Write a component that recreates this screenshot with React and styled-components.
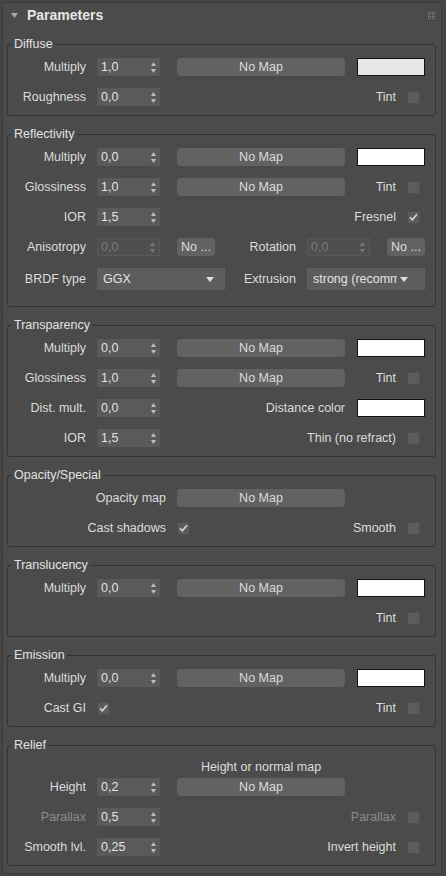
import React from 'react';
import styled, { createGlobalStyle } from 'styled-components';

const GlobalStyle = createGlobalStyle`
  html, body { margin: 0; padding: 0; background: #454545; }
  body {
    font-family: "Liberation Sans", Arial, sans-serif;
    font-size: 12.5px;
    color: #dcdcdc;
  }
  * { box-sizing: border-box; }
`;

const Page = styled.div`
  width: 446px;
  height: 876px;
  padding: 2px 0 0 2px;
  background: #454545;
  overflow: hidden;
`;

const Panel = styled.section`
  width: 440px;
  height: 872px;
  background: #4b4b4b;
  border: 1px solid #3a3a3a;
  border-radius: 4px 4px 3px 3px;
  padding: 0 5px 5px 4px;
  display: flex;
  flex-direction: column;
`;

const Header = styled.div`
  flex: none;
  height: 24px;
  display: flex;
  align-items: center;
  padding: 0 1px 0 4px;
`;

const HeaderTitle = styled.div`
  flex: 1;
  margin-left: 9px;
  font-weight: bold;
  font-size: 14px;
  color: #e6e6e6;
`;

const Groups = styled.div`
  flex: none;
  margin-top: 17px;
  display: flex;
  flex-direction: column;
  gap: 18px;
`;

const Group = styled.div`
  position: relative;
  border: 1px solid #333333;
  border-radius: 3px;
  padding: 13px 0 9px 0;
  display: flex;
  flex-direction: column;
`;

const Legend = styled.span`
  position: absolute;
  top: -8px;
  left: 4px;
  padding: 0 2px;
  line-height: 14px;
  background: #4b4b4b;
  color: #e2e2e2;
`;

const DEFAULT_COLS = '78px 11px 63px 17px 168px 12px 68px';
const ANISO_COLS = '78px 11px 63px 17px 38px 81px 11px 63px 17px 38px';
const BRDF_COLS = '78px 11px 128px 71px 11px 118px';
const WIDE_COLS = '158px 11px 168px 12px 68px';

const Row = styled.div`
  flex: none;
  display: grid;
  grid-template-columns: ${(p) => p.$cols || DEFAULT_COLS};
  grid-template-rows: ${(p) => p.$h || 18}px;
  height: ${(p) => p.$h || 18}px;
  margin-top: ${(p) => (p.$mt === undefined ? 12 : p.$mt)}px;
  margin-bottom: ${(p) => p.$mb || 0}px;
  align-items: center;
  &:first-of-type { margin-top: 0; }
`;

const Label = styled.div`
  grid-column: ${(p) => p.$col || '1'};
  grid-row: 1;
  text-align: ${(p) => p.$align || 'right'};
  white-space: nowrap;
  color: ${(p) => (p.$disabled ? '#8a8a8a' : '#dcdcdc')};
  line-height: 16px;
`;

const SpinBox = styled.div`
  grid-column: ${(p) => p.$col || '3'};
  grid-row: 1;
  height: 18px;
  display: flex;
  align-items: center;
  padding: 0 4px 0 4px;
  background: ${(p) => (p.$disabled ? '#4f4f4f' : '#5a5a5a')};
  border: ${(p) => (p.$disabled ? '1px solid #585858' : 'none')};
  color: ${(p) => (p.$disabled ? '#7a7a7a' : '#e2e2e2')};
`;

const SpinValue = styled.span`
  flex: 1;
  margin-left: ${(p) => (p.$disabled ? -1 : 0)}px;
`;

const MapButton = styled.button`
  grid-column: ${(p) => p.$col || '5'};
  grid-row: 1;
  justify-self: stretch;
  height: 18px;
  padding: 0;
  border: none;
  border-radius: 4px;
  background: #626262;
  color: #dcdcdc;
  font: inherit;
  text-align: center;
`;

const Swatch = styled.div`
  grid-column: ${(p) => p.$col || '7'};
  grid-row: 1;
  height: 18px;
  background: ${(p) => p.$color || '#ffffff'};
  border: 1px solid #111111;
`;

const CheckField = styled.div`
  grid-column: ${(p) => p.$col || '5 / 8'};
  grid-row: 1;
  display: flex;
  align-items: center;
  justify-content: ${(p) => (p.$left ? 'flex-start' : 'flex-end')};
  gap: 11px;
  padding-right: ${(p) => (p.$left ? 0 : 5)}px;
`;

const Box = styled.div`
  width: 13px;
  height: 13px;
  flex: none;
  background: #5c5c5c;
  border: 1px solid #4e4e4e;
  display: flex;
  align-items: center;
  justify-content: center;
`;

const Dropdown = styled.div`
  grid-column: ${(p) => p.$col || '3'};
  grid-row: 1;
  height: 22px;
  display: flex;
  align-items: center;
  padding: 0 ${(p) => p.$arrowPad || 11}px 0 6px;
  background: #5d5d5d;
  color: #e2e2e2;
  overflow: hidden;
`;

const DropText = styled.span`
  flex: 1;
  min-width: 0;
  white-space: nowrap;
  overflow: hidden;
  margin-right: 3px;
`;

const Caption = styled.div`
  grid-column: 5;
  grid-row: 1;
  text-align: center;
  line-height: 16px;
  color: #dcdcdc;
  white-space: nowrap;
`;

const Spinner = ({ value, col, disabled }) => (
  <SpinBox $col={col} $disabled={disabled}>
    <SpinValue $disabled={disabled}>{value}</SpinValue>
    <svg width="5" height="11" viewBox="0 0 5 11">
      <polygon points="2.5,0 5,4 0,4" fill={disabled ? '#777' : '#bdbdbd'} />
      <polygon points="0,7 5,7 2.5,11" fill={disabled ? '#777' : '#bdbdbd'} />
    </svg>
  </SpinBox>
);

const Check = ({ checked }) => (
  <Box>
    {checked && (
      <svg width="9" height="8" viewBox="0 0 9 8">
        <path d="M1 4.2 L3.3 6.8 L8 1.2" stroke="#d6d6d6" strokeWidth="1.6" fill="none" />
      </svg>
    )}
  </Box>
);

const CheckRight = ({ label, checked, col, disabled }) => (
  <CheckField $col={col}>
    <Label as="span" $disabled={disabled}>{label}</Label>
    <Check checked={checked} />
  </CheckField>
);

const Select = ({ value, col, arrowPad }) => (
  <Dropdown $col={col} $arrowPad={arrowPad}>
    <DropText>{value}</DropText>
    <svg width="8" height="5" viewBox="0 0 8 5">
      <polygon points="0,0 8,0 4,5" fill="#e0e0e0" />
    </svg>
  </Dropdown>
);

const Grip = () => (
  <svg width="7" height="7" viewBox="0 0 7 7">
    {[0, 2, 4, 6].map((y) =>
      [0, 2, 4, 6].map((x) => (
        <rect key={`${x}-${y}`} x={x} y={y} width="1" height="1" fill="#8c8c8c" />
      ))
    )}
  </svg>
);

export default function App() {
  return (
    <>
      <GlobalStyle />
      <Page>
        <Panel>
          <Header>
            <svg width="7" height="5" viewBox="0 0 7 5">
              <polygon points="0,0 7,0 3.5,5" fill="#a8a8a8" />
            </svg>
            <HeaderTitle>Parameters</HeaderTitle>
            <Grip />
          </Header>

          <Groups>
            <Group>
              <Legend>Diffuse</Legend>
              <Row>
                <Label>Multiply</Label>
                <Spinner value="1,0" />
                <MapButton>No Map</MapButton>
                <Swatch $color="#e6e6e6" />
              </Row>
              <Row>
                <Label>Roughness</Label>
                <Spinner value="0,0" />
                <CheckRight label="Tint" />
              </Row>
            </Group>

            <Group>
              <Legend>Reflectivity</Legend>
              <Row>
                <Label>Multiply</Label>
                <Spinner value="0,0" />
                <MapButton>No Map</MapButton>
                <Swatch />
              </Row>
              <Row>
                <Label>Glossiness</Label>
                <Spinner value="1,0" />
                <MapButton>No Map</MapButton>
                <CheckRight label="Tint" col="7" />
              </Row>
              <Row>
                <Label>IOR</Label>
                <Spinner value="1,5" />
                <CheckRight label="Fresnel" checked />
              </Row>
              <Row $cols={ANISO_COLS}>
                <Label>Anisotropy</Label>
                <Spinner value="0,0" disabled />
                <MapButton $col="5">No ...</MapButton>
                <Label $col="6">Rotation</Label>
                <Spinner value="0,0" col="8" disabled />
                <MapButton $col="10">No ...</MapButton>
              </Row>
              <Row $cols={BRDF_COLS} $h={22} $mb={7}>
                <Label>BRDF type</Label>
                <Select value="GGX" col="3" />
                <Label $col="4">Extrusion</Label>
                <Select value="strong (recommended)" col="6" arrowPad={17} />
              </Row>
            </Group>

            <Group>
              <Legend>Transparency</Legend>
              <Row>
                <Label>Multiply</Label>
                <Spinner value="0,0" />
                <MapButton>No Map</MapButton>
                <Swatch />
              </Row>
              <Row>
                <Label>Glossiness</Label>
                <Spinner value="1,0" />
                <MapButton>No Map</MapButton>
                <CheckRight label="Tint" col="7" />
              </Row>
              <Row>
                <Label>Dist. mult.</Label>
                <Spinner value="0,0" />
                <Label $col="5">Distance color</Label>
                <Swatch />
              </Row>
              <Row>
                <Label>IOR</Label>
                <Spinner value="1,5" />
                <CheckRight label="Thin (no refract)" />
              </Row>
            </Group>

            <Group>
              <Legend>Opacity/Special</Legend>
              <Row $cols={WIDE_COLS}>
                <Label>Opacity map</Label>
                <MapButton $col="3">No Map</MapButton>
              </Row>
              <Row $cols={WIDE_COLS}>
                <Label>Cast shadows</Label>
                <CheckField $col="3" $left>
                  <Check checked />
                </CheckField>
                <CheckRight label="Smooth" col="3 / 6" />
              </Row>
            </Group>

            <Group>
              <Legend>Translucency</Legend>
              <Row>
                <Label>Multiply</Label>
                <Spinner value="0,0" />
                <MapButton>No Map</MapButton>
                <Swatch />
              </Row>
              <Row>
                <CheckRight label="Tint" />
              </Row>
            </Group>

            <Group>
              <Legend>Emission</Legend>
              <Row>
                <Label>Multiply</Label>
                <Spinner value="0,0" />
                <MapButton>No Map</MapButton>
                <Swatch />
              </Row>
              <Row>
                <Label>Cast GI</Label>
                <CheckField $col="3" $left>
                  <Check checked />
                </CheckField>
                <CheckRight label="Tint" />
              </Row>
            </Group>

            <Group>
              <Legend>Relief</Legend>
              <Row $h={16}>
                <Caption>Height or normal map</Caption>
              </Row>
              <Row $mt={3}>
                <Label>Height</Label>
                <Spinner value="0,2" />
                <MapButton>No Map</MapButton>
              </Row>
              <Row>
                <Label $disabled>Parallax</Label>
                <Spinner value="0,5" />
                <CheckRight label="Parallax" disabled />
              </Row>
              <Row>
                <Label>Smooth lvl.</Label>
                <Spinner value="0,25" />
                <CheckRight label="Invert height" />
              </Row>
            </Group>
          </Groups>
        </Panel>
      </Page>
    </>
  );
}
